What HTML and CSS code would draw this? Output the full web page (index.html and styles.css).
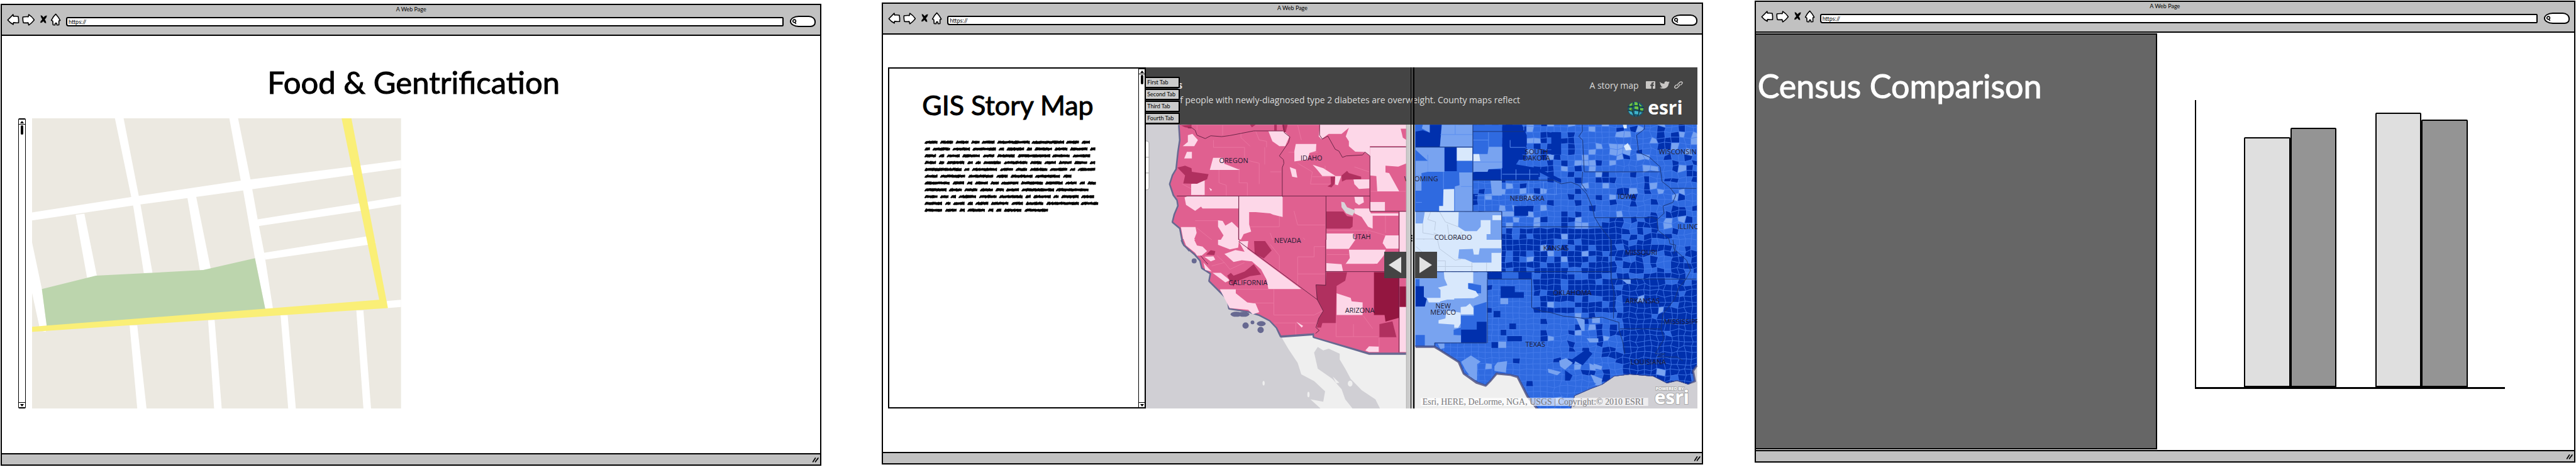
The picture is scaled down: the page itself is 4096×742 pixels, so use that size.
FILE: index.html
```html
<!DOCTYPE html>
<html lang="en">
<head>
<meta charset="utf-8">
<title>Food &amp; Gentrification wireframes</title>
<link rel="stylesheet" href="styles.css">
</head>
<body>
<svg class="defs" aria-hidden="true">
  <symbol id="i-back" viewBox="56 115 110 110"><path d="M63 174 L110 127 L113 142 Q135 140 155 144 Q160 170 158 198 Q135 200 113 197 L111 213 Q84 200 63 174Z"/></symbol>
  <symbol id="i-fwd" viewBox="195 115 110 110"><path d="M203 148 Q225 144 250 146 L254 127 Q284 146 302 174 Q280 202 254 219 L248 198 Q228 201 207 198 Q200 172 203 148Z"/></symbol>
  <symbol id="i-stop" viewBox="342 115 77 110"><path class="ink" d="M357 133 Q370 134 382 152 Q394 134 411 136 Q410 152 392 170 Q404 184 404 202 Q390 204 380 184 Q368 200 354 198 Q354 184 371 168 Q356 150 357 133Z"/></symbol>
  <symbol id="i-home" viewBox="440 115 99 110"><path d="M488 123 Q512 148 526 178 L515 183 L515 217 L498 218 L496 204 Q488 196 482 206 L481 218 L464 217 L461 183 L449 177 Q462 146 488 123Z"/></symbol>
  <symbol id="i-mag" viewBox="0 0 40 44"><path d="M20 5 Q34 6 32 20 Q28 30 18 28 Q6 24 9 13 Q12 5 20 5Z M24 28 L34 39"/></symbol>
  <symbol id="i-grip" viewBox="0 0 20 16"><path d="M3 14 L10 3 M10 14 L18 3 M11 12 L17 5"/></symbol>
</svg>
<main class="board">

<section class="window window-food">
  <header class="chrome">
    <p class="chrome-title">A Web Page</p>
    <div class="chrome-row">
      <button class="nav" aria-label="Back"><svg class="ic w20"><use href="#i-back"/></svg></button>
      <button class="nav" aria-label="Forward"><svg class="ic w20"><use href="#i-fwd"/></svg></button>
      <button class="nav nav-stop" aria-label="Stop"><svg class="ic w14"><use href="#i-stop"/></svg></button>
      <button class="nav" aria-label="Home"><svg class="ic w18"><use href="#i-home"/></svg></button>
      <input class="url" type="text" aria-label="Address" value="https://">
      <label class="search"><svg class="mag"><use href="#i-mag"/></svg><input type="text" aria-label="Search"></label>
    </div>
  </header>
  <div class="body-food">
    <h1 class="title">Food &amp; Gentrification</h1>
    <div class="food-row">
      <div class="scroll"><button class="up" aria-label="Scroll up"></button><span class="thumb"></span><button class="down" aria-label="Scroll down"></button></div>
      <div class="picture picture-street">
      <svg viewBox="59 397 677 977" preserveAspectRatio="none" role="img" aria-label="Street map">
        <rect x="59" y="397" width="677" height="977" fill="#ece9e1"/>
        <g fill="#fff">
          <path d="M211 397 H227 L255 660 L258 688 L280 918 H264 L245 697 L241 662Z"/>
          <path d="M421 397 H437 L460 605 L473 737 L485 850 L501 1038 H487 L468 868 L446 637 L442 607Z"/>
          <path d="M59 714 L241 662 L442 607 L648 559 L736 538 V565 L648 587 L462 636 L258 687 L59 741Z"/>
          <path d="M139 722 L155 718 L178 928 L160 935Z"/>
          <path d="M344 664 L360 660 L387 905 L367 909Z"/>
          <path d="M473 737 L662 682 L736 660 V687 L664 708 L474 760Z"/>
          <path d="M484 850 L672 795 L690 815 L675 823 L487 873Z"/>
          <path d="M59 815 L77 972 L86 1096 L84 1116 L74 1112 L59 985Z"/>
          <path d="M238 1094 H252 L269 1374 H252Z"/>
          <path d="M382 1076 H394 L407 1374 H393Z"/>
          <path d="M515 1060 H528 L543 1374 H529Z"/>
          <path d="M654 1044 H667 L681 1374 H667Z"/>
          <path d="M710 1012 L736 1008 V1032 L710 1036Z"/>
        </g>
        <path fill="#bcd5ad" d="M77 972 L176 927 L373 908 L468 868 L487 1040 L86 1098Z"/>
        <path fill="#faef77" d="M59 1099 L86 1095 L487 1038 L696 1008 L627 397 H645 L712 1036 L59 1116Z"/>
      </svg>
      </div>
    </div>
  </div>
  <footer class="status"><svg class="grip"><use href="#i-grip"/></svg></footer>
</section>

<section class="window window-gis">
  <header class="chrome">
    <p class="chrome-title">A Web Page</p>
    <div class="chrome-row">
      <button class="nav" aria-label="Back"><svg class="ic w20"><use href="#i-back"/></svg></button>
      <button class="nav" aria-label="Forward"><svg class="ic w20"><use href="#i-fwd"/></svg></button>
      <button class="nav nav-stop" aria-label="Stop"><svg class="ic w14"><use href="#i-stop"/></svg></button>
      <button class="nav" aria-label="Home"><svg class="ic w18"><use href="#i-home"/></svg></button>
      <input class="url" type="text" aria-label="Address" value="https://">
      <label class="search"><svg class="mag"><use href="#i-mag"/></svg><input type="text" aria-label="Search"></label>
    </div>
  </header>
  <div class="body-gis">
    <article class="story">
      <div class="story-text">
        <h1 class="title title-gis">GIS Story Map</h1>
        <svg class="scribble" id="scribble" viewBox="0 0 276 112" role="img" aria-label="Placeholder paragraph"></svg>
      </div>
      <div class="scroll scroll-story"><button class="up" aria-label="Scroll up"></button><span class="thumb"></span><button class="down" aria-label="Scroll down"></button></div>
    </article>
    <div class="storymap">
      <header class="map-head">
        <div class="map-row">
          <span class="map-title">s</span>
          <span class="map-links">
            <a href="#story">A story map</a>
            <a href="#facebook" aria-label="Facebook"><svg width="15" height="12" viewBox="0 0 15 12"><path fill="#c9c7c5" fill-rule="evenodd" d="M1 0H14Q15 0 15 1V11Q15 12 14 12H11V7.500H13V5.500H11V4.300Q11 3.600 12 3.600H13V1.800H11Q8.700 1.800 8.700 4V5.500H7V7.500H8.700V12H1Q0 12 0 11V1Q0 0 1 0Z"/></svg></a>
            <a href="#twitter" aria-label="Twitter"><svg width="16" height="12" viewBox="0 0 16 12"><path fill="#c9c7c5" d="M0 1Q3 4 7.500 4Q7 .500 10.500 .300Q12 .300 13 1.200L15.500 .300L14.500 2.200L16 2L14.300 3.800Q14 9 9.500 11Q4 13 0 10.300Q3 10.300 4.500 9Q2 8.600 1.500 6.800H2.800Q.500 6 .500 3.800L1.700 4Q-.300 2.700 0 1Z"/></svg></a>
            <a href="#link" aria-label="Link"><svg width="14" height="12" viewBox="0 0 14 12" fill="none" stroke="#c9c7c5" stroke-width="1.500"><path d="M6 7Q4.500 5.500 6.500 4L9 1.700Q11.500 .200 13 2Q13.500 3.500 11.500 5L10 6.300M8 5Q9.500 6.500 7.500 8L5 10.300Q2.500 12 1 10.300Q.200 8.700 2.200 7.200L4 5.700"/></svg></a>
          </span>
        </div>
        <div class="map-row map-row-sub">
          <p class="map-sub">f people with newly-diagnosed type 2 diabetes are overweight. County maps reflect</p>
          <span class="brand"><svg width="28" height="25" viewBox="0 0 28 25"><ellipse cx="14" cy="12.500" rx="13" ry="12" fill="#1c5670"/><g fill="#6fc644"><path d="M4 5L9 2L10 7L4 8Z"/><path d="M12 1L17 2L17 6L12 6Z"/><path d="M19 3L24 8L20 9Z"/><path d="M12 8L18 8L18 13L12 12Z"/><path d="M21 11L26 11L25 16L21 15Z"/><path d="M3 11L8 10L10 15L5 15Z"/></g><g fill="#3fb3c9"><path d="M2 15L8 17L10 22L5 20Z"/><path d="M12 15L18 16L18 21L12 20Z"/><path d="M20 17L24 18L19 22Z"/></g><path d="M1 9Q13 5 27 10M1 15Q14 12 27 16M10 1Q5 13 12 24M17 1Q22 13 17 24" fill="none" stroke="#16302f"/></svg><b>esri</b></span>
        </div>
      </header>
      <div class="picture">
      <svg viewBox="1820 198 879 452" preserveAspectRatio="none" role="img" aria-label="County maps of the United States">
        <rect x="1820" y="198" width="879" height="452" fill="#d0cfd4"/>
        <g transform="translate(1814 381.300) scale(.2918 .18158)" fill="#efefef">
          <path d="M760 850 L940 830 L1240 1000 H1460 V1480 H1300 L1275 1400 L1200 1320 L1140 1220 L1110 1130 L1080 1050 L1080 1000 L1020 955 L990 970 L960 940 L940 990 L960 1130 L1040 1220 L1090 1310 L1110 1400 L1150 1480 H975 L920 1400 L990 1420 L1000 1330 L940 1240 L870 1180 L850 1080 L800 960Z"/>
          <ellipse cx="664" cy="1258" rx="6" ry="20"/><ellipse cx="909" cy="1358" rx="6" ry="24"/><ellipse cx="1137" cy="1262" rx="13" ry="26"/><path d="M1042 1200L1078 1255L1060 1258Z"/>
        </g>
        <g fill="#676991">
          <ellipse cx="1897" cy="415" rx="4" ry="4"/><ellipse cx="1964" cy="500" rx="9" ry="4"/><ellipse cx="1976" cy="500" rx="9" ry="4"/><circle cx="1979" cy="518" r="5"/><circle cx="1990" cy="513" r="3"/><ellipse cx="2004" cy="515" rx="7" ry="4"/><ellipse cx="2003" cy="525" rx="5" ry="5"/>
        </g>
        <g transform="translate(1814 98.060) scale(.2918 .19455)">
          <path class="coast" d="M205 515 L210 640 L200 740 L190 880 L170 930 L155 1000 L175 1090 L195 1130 L200 1180 L180 1250 L170 1310 L210 1360 L225 1480 L262 1545"/>
          <path fill="#e06090" d="M205 515 L210 640 L200 740 L190 880 L170 930 L155 1000 L175 1090 L195 1130 L200 1180 L180 1250 L170 1310 L210 1360 L225 1480 L270 1568 H1445 V515Z"/>
          <path class="pinkline" d="M300 520V560M440 515V600M540 575V620L590 690M620 565L640 640L680 650V700M390 640V700H560M560 700V800L640 830V1000M530 870V990H575V1095M420 880V990L460 1010V1095M670 700V840M850 515L870 640M800 740H960M850 830L930 900L920 1000H1040M1000 850V940M1160 860L1240 900M750 1220V1350H590M830 1220L850 1335H1000M330 1060V1100M290 1300L420 1300L440 1380M300 1360L400 1480M1010 1380H1240L1330 1420M1230 1380V1530M700 1400L740 1568M880 1440L930 1520H1000M1330 1240V1400M450 1100V1200M1250 1060H1440M930 940H1080M700 900H760M220 1000L270 1040"/>
          <g fill="#fdd7e8">
            <path d="M250 600L275 590L305 640L285 690H222L250 655Z"/><path d="M245 737H272V790H230Z"/><path d="M388 785H442L450 835L535 885H370Z"/><path d="M690 567H775L805 610L782 690H750L712 650Z"/><path d="M840 672H952L950 730L915 745L905 800L832 815V730Z"/><path d="M807 862L840 880L848 948L820 940Z"/><path d="M932 842L990 870L1058 935H985L955 880Z"/>
            <path d="M972 515H1445V690H1245V770L1215 738L1165 735L1130 690V650L1113 610L1130 540L1090 590L1020 590L980 632L965 610Z"/><path d="M1245 697H1445V830L1400 858L1330 850V905L1350 910L1405 1060H1285L1280 935L1245 930Z"/><path d="M1155 962H1242V1035L1185 1040L1160 1000Z"/><path d="M268 1000L342 970V1090H268Z"/><path d="M1055 935H1088L1070 1010L1055 1005Z"/>
            <path d="M232 1110L250 1098H527V1200H330L322 1185L290 1220L240 1170Z"/><path d="M530 1100H768V1270L715 1250L700 1240L620 1230H585V1330L596 1390L555 1410L540 1455L530 1450Z"/><path d="M415 1297L440 1302L455 1340L490 1310L525 1360V1480L560 1510L520 1540L440 1535L412 1500L445 1420L415 1350Z"/><path d="M212 1352H292L298 1400L285 1450L340 1510L360 1568H270L228 1480Z"/>
            <path d="M1160 1105H1208L1212 1150L1185 1172L1165 1150Z"/><path d="M1160 1200H1240L1250 1240H1400V1260H1260V1365L1235 1350L1200 1270L1160 1240Z"/><path d="M1247 1147H1327V1222H1247Z"/><path d="M1008 1405H1155L1165 1460L1130 1530H1008Z"/><path d="M1330 1420H1402V1535H1325L1315 1480Z"/><path d="M1407 1227H1445V1568H1407Z"/><path d="M1130 1540H1325V1568H1130Z"/><path d="M530 1465H580L565 1500L600 1568H570Z"/><path d="M366 1030L382 1045L376 1058Z"/>
          </g>
          <path fill="#d9d3d8" d="M1088 1145L1105 1150L1120 1190L1165 1215L1150 1260L1115 1240L1090 1190Z"/>
          <g fill="#b0305f">
            <path d="M193 865L235 850L270 870L272 900L363 920L355 960L300 998L225 995L235 930Z"/><path d="M1120 892L1130 910L1197 940V960L1115 965L1092 980L1090 930Z"/><path d="M1030 940H1055L1050 1000L1035 1028L1013 1020L1032 1000Z"/><path d="M1006 1225H1100L1120 1262L1152 1270L1150 1350L1135 1365H1006Z"/><path d="M608 1467H672L680 1500L708 1540L695 1568H625L622 1510Z"/><path d="M765 515H795L785 575H773Z"/><path d="M722 515H736V563H722Z"/><path d="M590 515H620L600 535Z"/><path d="M212 520L270 515V545L235 535Z"/>
          </g>
          <path fill="#e06090" d="M1413 547H1445V640L1425 620Z"/>
          <path class="stateline" d="M250 540H272L290 560L300 600L345 628L375 605L435 612L480 603L610 565H770M772 515L778 580L808 615L800 660L750 770L772 800L775 830L766 865V1098M190 1098H1245M528 1100V1475L620 1568M1005 1100V1568M1245 770V1223H1445M1245 697H1445M970 515V600L985 632L1015 607L1055 715L1075 730L1095 782L1115 770L1205 762L1218 738L1245 770M1404 1225V1568M768 1098V1105"/>
        </g>
        <g transform="translate(1814 381.300) scale(.2918 .18158)">
          <path class="coast" d="M218 0 L232 45 L290 125 L320 180 L330 245 L378 295 L370 360 L420 440 L470 520 L478 600 L580 625 L640 655 L700 705 L738 770 L760 845 L940 825 L940 850 L1240 995 H1445"/>
          <path fill="#e06090" d="M222 0 L232 45 L290 125 L320 180 L330 245 L378 295 L370 360 L420 440 L470 520 L478 600 L580 625 L640 655 L700 705 L738 770 L760 840 L940 820 L940 850 L1240 990 H1445 V0Z"/>
          <path class="pinkline" d="M430 435H690M720 435V660M610 555H720M720 660H940L990 620M720 730H950M840 730V830M1060 730V850H1290M1155 740V850M1210 670L1260 780M1295 860V985M850 150H940V60H1000M850 150V420M850 300H1000M700 40L750 140V270M1010 130H1130M380 230L450 200L480 260L560 200M410 140L450 200M1110 215H1270M1280 480V640M1345 290V700"/>
          <g fill="#fdd7e8">
            <path d="M228 0H285L300 50L330 60L355 100L325 140L300 140L290 115L240 50Z"/><path d="M415 0H530L525 70L480 85L415 45Z"/><path d="M528 15L580 12L575 80L870 432H690L680 350L650 260L600 190L545 180L500 195L450 125L510 90L560 105Z"/><path d="M340 150L390 145L400 175L375 190Z"/><path d="M335 200L380 280L345 265Z"/><path d="M385 290L430 290L480 355L455 375Z"/><path d="M425 435H512V470L575 550L620 560L640 635L605 655L580 615L478 600Z"/>
            <path d="M1007 0H1165L1130 80H1007Z"/><path d="M1320 0H1402V78H1335L1315 30Z"/><path d="M1407 0H1445V110H1407Z"/><path d="M1130 88H1330L1320 140L1285 210H1113L1135 160Z"/><path d="M1007 205L1090 215L1098 275H1007Z"/><path d="M1063 470L1140 510L1145 540L1205 550V660H1063Z"/><path d="M1407 590H1445V985H1407Z"/><path d="M1240 935L1293 938V985H1240L1220 970Z"/><path d="M843 720L880 755L872 770Z"/>
          </g>
          <g fill="#b0305f"><path d="M612 12H672L708 95L665 165L615 120Z"/><path d="M375 92L400 100L395 135L350 130Z"/><path d="M610 215L650 305L590 320L510 370L500 410L478 360L465 315L485 290L500 315L560 280Z"/><path d="M1007 285H1120L1110 360L1063 405L1058 730H985L978 770H955L965 690L990 625L955 520L952 395H1003Z"/><path d="M1297 740L1368 715L1390 855H1297Z"/></g>
          <g fill="#931640"><path d="M1267 285H1403V685L1330 718L1325 660H1267Z"/><path d="M1407 410H1445V588H1407Z"/></g>
          <path class="stateline" d="M528 15L957 525L990 625L965 690L950 770L968 795L948 822M1003 0V400L950 395L957 525M1003 280H1404M1404 0V988M320 140L345 190L360 215"/>
        </g>

        <g transform="translate(2222.600 381.300) scale(.3127 .18158)">
          <path fill="#efefef" d="M60 920H900V1480H60Z"/>
          <path class="coast" d="M88 935H185L200 950L310 1070L335 1170L400 1250L445 1275L470 1230L500 1170L570 1180L610 1200L660 1370L710 1480M880 1480L900 1370L980 1310L1040 1270L1100 1200L1180 1180L1300 1200L1370 1260L1420 1240L1480 1270L1510 1240L1500 1150L1520 1100"/>
          <path fill="#d0cfd4" d="M880 1480L900 1370L980 1310L1040 1270L1100 1200L1180 1180L1300 1200L1370 1260L1420 1240L1480 1270L1530 1240V1480Z"/>
        </g>
        <clipPath id="blueclip"><path d="M2235 198H2699V581L2692 590L2695 606L2685 612L2667 606L2651 610L2629 599L2592 596L2567 599L2548 612L2529 619L2504 630L2498 650H2445L2429 630L2413 599L2401 596L2379 594L2370 605L2362 613L2348 608L2327 594L2320 576L2285 554L2280 551H2235Z"/></clipPath>
        <g clip-path="url(#blueclip)">
          <rect x="2235" y="198" width="464" height="452" fill="#2f6ae0"/>
          <g id="counties"></g>
          <g transform="translate(2222.600 98.060) scale(.3127 .19455)">
            <path fill="#2f6ae0" d="M60 515H530V970H380V1225H60Z"/>
            <g fill="#0030ad"><path d="M88 570L125 560L160 580V515H220L212 695H88Z"/><path d="M235 700H298V895H235Z"/><path d="M530 515H630L655 600V680L640 740L600 840L715 870V968H380V905L460 880H525L530 860Z"/><path d="M590 1180H662V1260H590Z"/><path d="M780 575H830V760H780Z"/><path d="M715 870L830 960V990L800 970L715 900Z"/></g>
            <g fill="#78a3f0"><path d="M125 515H160V580L120 545Z"/><path d="M222 515H380V697H212Z"/><path d="M88 702H235V900H150V810L88 720Z"/><path d="M88 810H150V900L118 910V1055H88Z"/><path d="M310 905H378V1225H288V1020L312 1010Z"/><path d="M460 695H530V870L460 880L455 900H382V755H455Z"/><path d="M470 972H528V1095H478Z"/><path d="M530 1225H590V1265H530Z"/></g>
            <g fill="#d8e8fc"><path d="M298 702H378V810H298Z"/><path d="M230 1043L285 1040V1222H208V1180H228Z"/><path d="M382 755H412L418 812H382Z"/><path d="M1150 690L1170 665L1190 720L1160 725Z"/><path d="M1145 515H1165V545H1150Z"/></g>
            <path fill="#d8e8fc" d="M60 1227H526V1568H60Z"/>
            <path fill="#78a3f0" d="M88 1227H135L125 1322H88ZM308 1227H526V1255H480V1295H420V1350L400 1385H340L305 1350ZM470 1295H526V1470H450V1410H470ZM420 1525H526V1568H420Z"/>
            <path class="blueline" d="M290 515V595H380M215 595H290M460 575V700M380 640H460M380 820H530M90 930H120M230 900V1040M90 1150H120M525 870V968M600 880V968M670 880V968M530 920H715M570 640V700H650M665 975V1085M740 980V1080M805 990V1080M530 1085H810M640 515V560M150 760V810M320 1020H378M390 1095H478M440 1100V1225"/>
            <path class="paleline" d="M165 1227L150 1290L190 1310L185 1380M210 1227L240 1310L305 1350M125 1322V1400L200 1420M90 1450H180L230 1500L240 1568M130 1450V1568M250 1330L260 1440H380M320 1390V1480H440M385 1480V1568M180 1400L240 1440M290 1480V1568"/>
            <path class="blueborder" d="M88 697H380M380 515V1225M380 570H640M380 968H790L830 998L880 985L920 1010L960 1080L990 1190L1000 1270L1030 1350L1085 1460V1568M88 1225H527V1568M527 1350H1040M948 900H1335M948 900L940 640L920 610L938 570V515M940 900L935 1000L960 1060M1000 1275H1300L1320 1290M1255 515V550L1215 600L1225 740L1280 780L1335 860L1345 980L1385 1030L1415 1090L1400 1150L1350 1180L1355 1240L1320 1290L1325 1380L1380 1450L1385 1490L1415 1500L1405 1568M1385 1035H1520"/>
          </g>
          <g transform="translate(2222.600 381.300) scale(.3127 .18158)">
            <path fill="#d8e8fc" d="M60 0H526V280H60Z"/>
            <path fill="#78a3f0" d="M310 85L380 80L385 130L410 130L415 75H526V115H475V200H380L340 170L305 165Z"/>
            <path class="paleline" d="M200 0L210 80L290 180M90 60L130 120M200 185H240V280M290 180L320 170M375 200V280M450 200V280M200 235H380"/>
            <path fill="#78a3f0" d="M60 284H453V905H60Z"/>
            <path fill="#78a3f0" d="M60 900H185V935H60Z"/>
            <g fill="#2f6ae0"><path d="M88 345H108V410H88Z"/><path d="M357 380L422 400V470H400L357 430Z"/><path d="M385 580L450 545V905H320V838L282 835V790L318 770V665H385Z"/><path d="M88 835H135V933H88Z"/></g>
            <g fill="#0030ad"><path d="M88 408H130V500L145 520L135 585H88Z"/><path d="M320 788H400V720H450V905H320Z"/><path d="M458 284H526V344H458Z"/><path d="M612 284H680V344H612Z"/><path d="M522 408H594V460H640V510H522Z"/><path d="M486 625H520V680H486Z"/><path d="M555 845H630V890H555Z"/><path d="M566 735H600V785H566Z"/><path d="M522 790H550V838H522Z"/><path d="M475 898H508V948H475Z"/><path d="M850 1145L888 1190L875 1235L850 1235Z"/><path d="M885 1050L960 960L990 1000L940 1100Z"/></g>
            <path fill="#2f6ae0" d="M528 284H612V344H528Z"/>
            <g fill="#d8e8fc"><path d="M232 284H382V380H355V430L395 450L410 490L385 512L285 515V525H250L215 540L210 550H155L145 510H215V440L202 420L250 400L235 340Z"/><path d="M318 590L345 585L365 560L383 600V655H318Z"/><path d="M245 620L318 640V735L305 772H285V745L205 735V705L240 690Z"/></g>
            <g fill="#78a3f0"><path d="M370 1015L420 1070L402 1090V1230L385 1235L345 1150L320 1070Z"/><path d="M505 1075L555 1065L548 1165L490 1150V1110Z"/><path d="M820 1060L855 1038L890 1080L850 1140L825 1110Z"/><path d="M762 1130L830 1160L810 1188L765 1165Z"/><path d="M980 1180L1040 1220L1035 1270L1000 1255Z"/><path d="M995 1085L1040 1110L1035 1140L1000 1130Z"/><path d="M520 513H560V565H520Z"/><path d="M510 893H550V948H510Z"/><path d="M200 910H235V950L215 960Z"/><path d="M905 680L950 700V800H935Z"/><path d="M960 865H1020V900H975Z"/><path d="M988 680H1028V730H988Z"/><path d="M1140 350H1185V390L1165 385Z"/></g>
            <path class="blueborder" d="M88 280H1085V345M457 284V345M454 345V905M457 345H680V595L730 625L780 640L840 670L900 680L950 690L1040 680L1125 725M88 935H185V905H450M1085 0V345L1100 470L1097 690M1085 345H1520M1125 725V785L1145 900L1155 1000M1130 782H1340M1400 0L1405 80L1470 180L1490 270L1465 350L1430 420L1410 520L1350 650L1340 780L1355 870L1310 1000H1360L1320 1028H1420L1450 1060"/>
          </g>
          <path class="coast-in" d="M2235 551H2280L2285 554L2320 576L2327 594L2348 608L2362 613L2370 605L2379 594L2401 596L2413 599L2429 630L2445 650M2498 650L2504 630L2529 619L2548 612L2567 599L2592 596L2629 599L2651 610L2667 606L2685 612L2695 606L2692 590L2699 581"/>
        </g>
        <g class="labels">
          <text x="1960" y="259">OREGON</text><text x="2084" y="255">IDAHO</text><text x="2259" y="288">WYOMING</text><text x="2046" y="386">NEVADA</text><text x="2164" y="380">UTAH</text><text x="1983" y="454">CALIFORNIA</text><text x="2161" y="498">ARIZONA</text><text x="2310" y="381">COLORADO</text><text x="2294" y="491">NEW</text><text x="2294" y="501">MEXICO</text>
          <text x="2443" y="245">SOUTH</text><text x="2443" y="255">DAKOTA</text><text x="2668" y="245">WISCONSIN</text><text x="2428" y="319">NEBRASKA</text><text x="2587" y="316">IOWA</text><text x="2474" y="398">KANSAS</text><text x="2690" y="364">ILLINOIS</text><text x="2610" y="405">MISSOURI</text><text x="2500" y="470">OKLAHOMA</text><text x="2612" y="483">ARKANSAS</text><text x="2676" y="516">MISSISSIPPI</text><text x="2441" y="552">TEXAS</text><text x="2621" y="580">LOUISIANA</text>
        </g>
        <path fill="#fff" stroke="#999" d="M1820 224Q1825 224 1825 228V298Q1825 302 1820 302M1820 250H1825M1820 275H1825"/>
        <rect x="2258" y="633" width="363" height="13" fill="#fff" fill-opacity=".65"/>
        <text class="attrib" x="2261" y="644">Esri, HERE, DeLorme, NGA, USGS | Copyright:© 2010 ESRI</text>
        <g class="powered"><text class="powered-by" x="2633" y="621">POWERED BY</text><text class="powered-esri" x="2631" y="643">esri</text></g>
        <rect x="2235" y="198" width="14" height="452" fill="#cbcbcb"/><path d="M2235.500 198V650" stroke="#b4b4b4"/><path d="M2248.500 198V650" stroke="#b4b4b4"/>
        <path d="M2243 374h2v2h-2zM2243 378h2v2h-2zM2243 382h2v2h-2z"/>
      </svg>
      </div>
      <span class="divider"></span>
      <button class="swipe swipe-left" aria-label="Swipe left"><svg width="20" height="26" viewBox="0 0 20 26"><path fill="#e3e3e3" d="M20 0V26L0 13Z"/></svg></button>
      <button class="swipe swipe-right" aria-label="Swipe right"><svg width="20" height="26" viewBox="0 0 20 26"><path fill="#e3e3e3" d="M0 0V26L20 13Z"/></svg></button>
      <nav class="tabs"><button>First Tab</button><button>Second Tab</button><button>Third Tab</button><button>Fourth Tab</button></nav>
    </div>
  </div>
  <footer class="status"><svg class="grip"><use href="#i-grip"/></svg></footer>
</section>

<section class="window window-census">
  <header class="chrome">
    <p class="chrome-title">A Web Page</p>
    <div class="chrome-row">
      <button class="nav" aria-label="Back"><svg class="ic w20"><use href="#i-back"/></svg></button>
      <button class="nav" aria-label="Forward"><svg class="ic w20"><use href="#i-fwd"/></svg></button>
      <button class="nav nav-stop" aria-label="Stop"><svg class="ic w14"><use href="#i-stop"/></svg></button>
      <button class="nav" aria-label="Home"><svg class="ic w18"><use href="#i-home"/></svg></button>
      <input class="url" type="text" aria-label="Address" value="https://">
      <label class="search"><svg class="mag"><use href="#i-mag"/></svg><input type="text" aria-label="Search"></label>
    </div>
  </header>
  <div class="body-census">
    <aside class="census-panel"><h1 class="title title-census">Census Comparison</h1></aside>
    <div class="chart-wrap">
      <div class="chart" role="img" aria-label="Bar chart">
        <div class="pair"><span class="bar light" style="height:87.1%"></span><span class="bar" style="height:90.3%"></span></div>
        <div class="pair"><span class="bar light" style="height:95.6%"></span><span class="bar" style="height:93.3%"></span></div>
      </div>
    </div>
  </div>
  <footer class="status"><svg class="grip"><use href="#i-grip"/></svg></footer>
</section>
</main>
<script src="app.js"></script>
</body>
</html>
```
FILE: styles.css
```css
* { box-sizing: border-box; }
body { margin: 0; background: #fff; color: #000; font-family: Lato, "Open Sans", sans-serif; }
h1, p { margin: 0; font-weight: 400; }
button { margin: 0; padding: 0; border: 0; background: none; font: inherit; color: inherit; }
.defs { display: none; }
.board { display: flex; gap: 82px; min-height: 100vh; padding: 0 1px; }

.window { flex: 1 1 0; min-width: 0; display: flex; flex-direction: column; border: 2px solid #000; }
.window-food { margin: 6px 14px 2px 0; }
.window-gis { margin: 4px 0 4px; }
.window-census { margin: 1px 0 7px; }

.chrome { background: #c1c1c1; border-bottom: 2px solid #000; min-height: 49px; padding-top: 1px; }
.chrome-title { font-size: 9px; line-height: 12px; text-align: center; }
.chrome-row { display: flex; padding: 0 7px 0 8px; }
.nav { display: block; height: 20px; margin-right: 4px; }
.nav-stop { margin-left: 3px; }
.ic { display: block; height: 20px; fill: #fff; stroke: #000; stroke-width: 9; stroke-linejoin: round; }
.ic .ink { fill: #000; }
.w20 { width: 20px; }
.w18 { width: 18px; }
.w14 { width: 14px; fill: #000; stroke-width: 1; }
.url { flex: 1; min-width: 0; height: 15px; margin: 6px 10px 0 3px; padding: 0 2px; border: 2px solid #000; border-radius: 3px 2px 2px 4px; background: #fff; font: 9px/11px Lato, sans-serif; color: #000; }
.search { display: flex; align-items: center; width: 41px; height: 18px; margin-top: 4px; padding-left: 1px; border: 2px solid #000; border-radius: 14px 11px 8px 14px / 9px 9px 7px 9px; background: #fff; }
.search input { flex: 1; min-width: 0; height: 10px; padding: 0; border: 0; background: transparent; }
.mag { width: 8px; height: 9px; fill: none; stroke: #000; stroke-width: 8; }
.status { display: flex; justify-content: flex-end; align-items: center; height: 18px; padding-right: 2px; background: #c1c1c1; border-top: 2px solid #000; }
.grip { width: 11px; height: 9px; fill: none; stroke: #000; stroke-width: 3; stroke-linecap: round; }

.title { font-size: 49px; line-height: 60px; white-space: nowrap; -webkit-text-stroke: 1px currentColor; }
.body-food { flex: 1; display: flex; flex-direction: column; padding: 43px 0 71px 26px; }
.body-food .title { text-align: center; padding-right: 18px; }
.food-row { flex: 1; display: flex; gap: 10px; margin-top: 28px; }

/* Pictures take the room that the layout gives them. */
.picture { flex: 1; display: flex; contain: size; min-height: 200px; }
.picture svg { flex: 1; min-width: 0; min-height: 0; display: block; }
.picture-street { flex: 0 0 46%; }

.scroll { display: flex; flex-direction: column; align-items: center; width: 12px; border: 2px solid #000; border-width: 2px 1px; border-radius: 2px; background: #fff; }
.up, .down { display: flex; align-items: center; justify-content: center; width: 100%; height: 8px; }
.up { border-bottom: 1px solid #000; }
.down { border-top: 1px solid #000; margin-top: auto; }
.up::before, .down::before { content: ""; border: 3px solid transparent; }
.up::before { border-top: 0; border-bottom: 4px solid #000; }
.down::before { border-bottom: 0; border-top: 4px solid #000; }
.thumb { width: 4px; height: 15px; margin-top: 1px; border-radius: 2px; background: #000; }

.body-gis { flex: 1; display: flex; padding: 52px 7px 69px 8px; }
.story { flex: 407 1 0; min-width: 0; display: flex; border: 2px solid #000; }
.story-text { flex: 1; min-width: 0; padding: 31px 0 0 52px; }
.title-gis { font-size: 43px; line-height: 53px; }
.scribble { display: block; width: 276px; height: 112px; margin: 30px 0 0 4px; fill: none; stroke: #000; stroke-width: 2; stroke-linejoin: round; stroke-linecap: round; overflow: visible; }
.scroll-story { width: 10px; border-width: 1px 0 0 1px; border-radius: 0; }

.storymap { flex: 879 1 0; min-width: 0; position: relative; display: flex; flex-direction: column; font-family: "Open Sans", "Noto Sans", sans-serif; overflow: hidden; }
.map-head { height: 91px; padding: 18px 23px 0 54px; background: #444; color: #dcdcdc; font-size: 14px; }
.map-row { display: flex; justify-content: space-between; align-items: center; height: 20px; }
.map-title { margin-left: -4px; font-size: 16px; font-weight: 700; }
.map-links { display: flex; align-items: center; gap: 7px; }
.map-links a { color: inherit; text-decoration: none; }
.map-links a:first-child { margin-right: 4px; }
.map-links svg { display: block; }
.map-row-sub { align-items: flex-start; height: auto; }
.map-sub { line-height: 28px; white-space: nowrap; }
.brand { display: flex; align-items: center; gap: 5px; height: 28px; margin-top: 14px; color: #fff; font-size: 30px; line-height: 28px; }
.brand b { padding-bottom: 5px; }
.coast { fill: none; stroke: #676991; stroke-width: 5; stroke-linejoin: round; vector-effect: non-scaling-stroke; }
.coast-in { fill: none; stroke: #454a80; stroke-width: 2; }
.pinkline, .blueline, .paleline, .stateline, .blueborder { fill: none; vector-effect: non-scaling-stroke; }
.pinkline { stroke: #ea75a0; }
.blueline { stroke: #5b8ff0; }
.paleline { stroke: #bccbe0; }
.stateline { stroke: #6b2547; }
.blueborder { stroke: #1a3577; }
.labels { font-size: 11px; fill: #1d1a33; text-anchor: middle; }
.attrib { font: 14px "Liberation Serif", serif; fill: #77777a; }
.powered { fill: #fff; stroke: #aaa; stroke-width: 2; paint-order: stroke; font-weight: 700; }
.powered-by { font-size: 7px; }
.powered-esri { font-size: 30px; }
.divider { position: absolute; top: 0; bottom: 0; left: 48%; width: 6px; border-left: 1px solid #000; border-right: 2px solid #000; }
.swipe { position: absolute; top: 54%; display: flex; align-items: center; justify-content: center; width: 35px; height: 42px; background: #444; }
.swipe-left { left: 43.2%; }
.swipe-right { left: 48.8%; }
.tabs { position: absolute; top: 15px; left: 0; display: flex; flex-direction: column; gap: 1px; font-family: Lato, sans-serif; }
.tabs button { height: 18px; width: 54px; padding-left: 2px; border: 2px solid #000; border-left: 0; border-radius: 0 2px 2px 0; background: #cbcbcb; font-size: 9px; line-height: 12px; text-align: left; white-space: nowrap; }

.body-census { flex: 1; display: flex; padding: 1px 0; }
.census-panel { flex: 0 0 49.2%; margin-left: -2px; padding: 51px 0 0 3px; border: 2px solid #000; background: #666; color: #fff; }
.title-census { font-size: 52px; }
.chart-wrap { flex: 1; display: flex; padding: 106px 110px 96px 60px; }
.chart { flex: 1; display: flex; gap: 17.4%; padding: 0 12% 0 15.5%; border-left: 2px solid #000; border-bottom: 3px solid #000; }
.pair { flex: 1; display: flex; align-items: flex-end; }
.bar { flex: 1; border: 2px solid #000; border-radius: 2px 2px 0 0; background: #949494; }
.bar.light { background: #dfdfdf; }
```
FILE: app.js
```js
const NS = 'http://www.w3.org/2000/svg';
let seed = 7;
const rnd = () => (seed = (seed * 16807) % 2147483647) / 2147483647;
const add = (parent, d, attrs) => {
  const p = document.createElementNS(NS, 'path');
  p.setAttribute('d', d);
  for (const k in attrs) p.setAttribute(k, attrs[k]);
  parent.appendChild(p);
};

// Placeholder paragraph: one list of word widths for each line.
const lines = [
  [21, 21, 21, 13, 21, 51, 51, 21, 13],
  [9, 28, 28, 38, 9, 28, 9, 28, 21, 28, 9],
  [19, 9, 21, 29, 19, 29, 51, 29, 29],
  [19, 9, 29, 9, 9, 29, 38, 19, 19, 21, 21, 9],
  [59, 9, 41, 21, 19, 28, 28, 9, 28],
  [21, 41, 41, 19, 35, 41, 13],
  [41, 19, 9, 21, 13, 28, 35, 28, 19, 9, 13],
  [35, 21, 21, 21, 13, 21, 51, 51],
  [21, 13, 9, 29, 28, 38, 9, 28, 9, 28, 21],
  [29, 9, 19, 9, 21, 29, 19, 29, 51, 29],
  [29, 19, 9, 29, 9, 9, 29, 38]
];
const scribble = document.getElementById('scribble');
lines.forEach((words, row) => {
  let x = 1;
  const y = 3 + row * 10.8;
  let d = '';
  words.forEach(w => {
    d += `M${x} ${y + 1.5}`;
    for (let i = 1; i < w - 2; i += 2.4) {
      d += `L${(x + i + 1).toFixed(1)} ${(y - 1 - rnd()).toFixed(1)}L${(x + i + .8).toFixed(1)} ${(y + 1 + rnd()).toFixed(1)}`;
    }
    x += w + 3.7;
  });
  add(scribble, d, {});
});

// County mosaic: share of dark and of light cells by area.
const mix = (x, y) => {
  if (x > 2640 && y < 390) return [.2, .14];
  if (y < 287 && x < 2517) return [.36, .1];
  if (y < 274) return [.06, .2];
  if (y < 350 && x < 2530) return [.14, .1];
  if (y < 347) return [.14, .12];
  if (y < 361 && x < 2562) return [.3, .14];
  if (y < 432 && x < 2562) return [.72, .03];
  if (y < 444) return [.68, .02];
  if (x < 2435) return [.02, .01];
  if (y < 498 && x < 2567) return [.78, .02];
  if (x > 2578) return [.93, .01];
  if (x > 2490 && y < 600) return [.28, .1];
  return [.02, .01];
};
const g = document.getElementById('counties');
const W = 11, H = 9, pts = [];
for (let r = 0; r <= 52; r++) {
  pts.push([]);
  for (let c = 0; c <= 42; c++) {
    const x = 2240 + c * W, y = 192 + r * H;
    const j = x > 2560 || (x > 2470 && y > 530) ? 5 : 1.5;
    pts[r].push([Math.round(x + (rnd() - .5) * j), Math.round(y + (rnd() - .5) * j)]);
  }
}
for (let r = 0; r < 52; r++) for (let c = 0; c < 42; c++) {
  const q = [pts[r][c], pts[r][c + 1], pts[r + 1][c + 1], pts[r + 1][c]];
  const [dark, light] = mix(q[0][0] + W / 2, q[0][1] + H / 2);
  const t = rnd();
  const fill = t < dark ? '#0030ad' : t < dark + light ? '#78a3f0' : '#2f6ae0';
  add(g, 'M' + q.map(p => p.join(' ')).join('L') + 'Z', { fill, stroke: '#4c82ee', 'stroke-width': .6 });
}
```
